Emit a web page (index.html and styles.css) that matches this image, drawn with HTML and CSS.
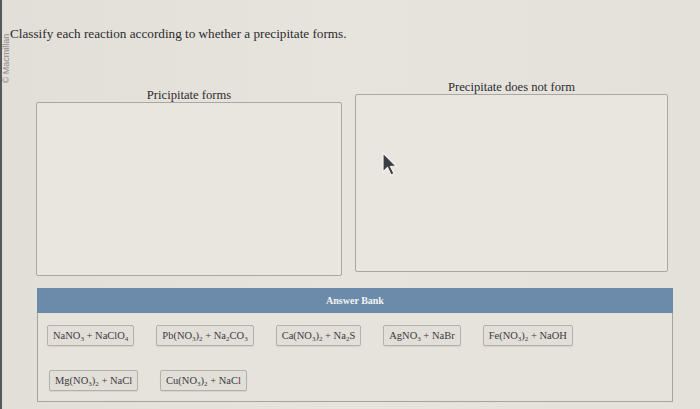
FILE: index.html
```html
<!DOCTYPE html>
<html>
<head>
<meta charset="utf-8">
<link rel="stylesheet" href="styles.css">
</head>
<body>
<div class="page">
  <div class="edge"><span class="edge-text">© Macmillan</span></div>
  <div class="main">
    <p class="title">Classify each reaction according to whether a precipitate forms.</p>
    <div class="bins">
      <div class="bin bin-left">
        <div class="bin-label">Pricipitate forms</div>
        <div class="bin-box"></div>
      </div>
      <div class="bin bin-right">
        <div class="bin-label">Precipitate does not form</div>
        <div class="bin-box"></div>
      </div>
    </div>
    <div class="bank">
      <div class="bank-head">Answer Bank</div>
      <div class="bank-body">
        <div class="row">
          <span class="chip">NaNO<sub>3</sub> + NaClO<sub>4</sub></span>
          <span class="chip">Pb(NO<sub>3</sub>)<sub>2</sub> + Na<sub>2</sub>CO<sub>3</sub></span>
          <span class="chip">Ca(NO<sub>3</sub>)<sub>2</sub> + Na<sub>2</sub>S</span>
          <span class="chip">AgNO<sub>3</sub> + NaBr</span>
          <span class="chip">Fe(NO<sub>3</sub>)<sub>2</sub> + NaOH</span>
        </div>
        <div class="row">
          <span class="chip">Mg(NO<sub>3</sub>)<sub>2</sub> + NaCl</span>
          <span class="chip">Cu(NO<sub>3</sub>)<sub>2</sub> + NaCl</span>
        </div>
      </div>
    </div>
  </div>
  <svg class="cursor" width="16" height="26" viewBox="0 0 16 26">
    <path d="M2 1 L2 20 L6.5 15.5 L10 23 L13 21.5 L9.5 14.5 L15 14 Z" fill="#3a3d42" stroke="#f4f3ef" stroke-width="1.2"/>
  </svg>
</div>
</body>
</html>
```

FILE: styles.css
```css
html, body {
  margin: 0;
  padding: 0;
}
body {
  background: #e4e1da;
  font-family: "Liberation Serif", "Times New Roman", serif;
  color: #2b2b2b;
  width: 700px;
  height: 409px;
  overflow: hidden;
}
.page {
  position: relative;
  display: flex;
  height: 409px;
  background: linear-gradient(90deg, #e2dfd8 0%, #e7e4dd 50%, #e4e1da 100%);
}
.edge {
  width: 8px;
  flex: none;
  border-left: 2px solid #55575a;
  box-sizing: border-box;
  position: relative;
}
.edge-text {
  position: absolute;
  left: -46px;
  top: 54px;
  width: 100px;
  height: 9px;
  transform: rotate(-90deg);
  font-family: "Liberation Sans", sans-serif;
  font-size: 9px;
  line-height: 9px;
  color: #8d8c8a;
  white-space: nowrap;
  text-align: center;
}
.main {
  flex: 1;
  padding-left: 2px;
}
.title {
  margin: 26px 0 0 0;
  font-size: 13.2px;
  line-height: 16px;
  color: #2a2a2c;
}
.bins {
  display: grid;
  grid-template-columns: 306px 313px;
  column-gap: 13px;
  margin-left: 26px;
  margin-top: 38px;
  align-items: start;
}
.bin-label {
  text-align: center;
  font-size: 12.6px;
  line-height: 14px;
  color: #2c2c2e;
}
.bin-left {
  margin-top: 8px;
}
.bin-box {
  border: 1.5px solid #a9a7a2;
  border-radius: 2px;
  background: #e9e6e0;
  box-sizing: border-box;
}
.bin-left .bin-box {
  height: 174px;
}
.bin-right .bin-box {
  height: 178px;
}
.bank {
  margin-left: 27px;
  margin-top: 12px;
  width: 636px;
}
.bank-head {
  background: #6c8aa9;
  color: #f2f4f6;
  font-weight: bold;
  font-size: 10px;
  height: 25px;
  line-height: 25px;
  text-align: center;
}
.bank-body {
  border: 1px solid #a5a39e;
  border-top: none;
  background: #e6e3dc;
  height: 89px;
  box-sizing: border-box;
  padding: 12px 0 0 9px;
  display: flex;
  flex-direction: column;
  gap: 24px;
}
.row {
  display: flex;
  gap: 22px;
}
.row + .row {
  padding-left: 2px;
}
.chip {
  display: inline-block;
  border: 1px solid #b3b1ac;
  border-radius: 2px;
  background: #e2dfd8;
  box-shadow: 0 1px 1px rgba(0,0,0,0.08);
  font-size: 10.5px;
  line-height: 19px;
  padding: 0 5px;
  color: #3a3a3e;
  white-space: nowrap;
}
.chip sub {
  font-size: 7px;
  line-height: 0;
  vertical-align: -2px;
}
.cursor {
  position: absolute;
  left: 381px;
  top: 152px;
}
```
